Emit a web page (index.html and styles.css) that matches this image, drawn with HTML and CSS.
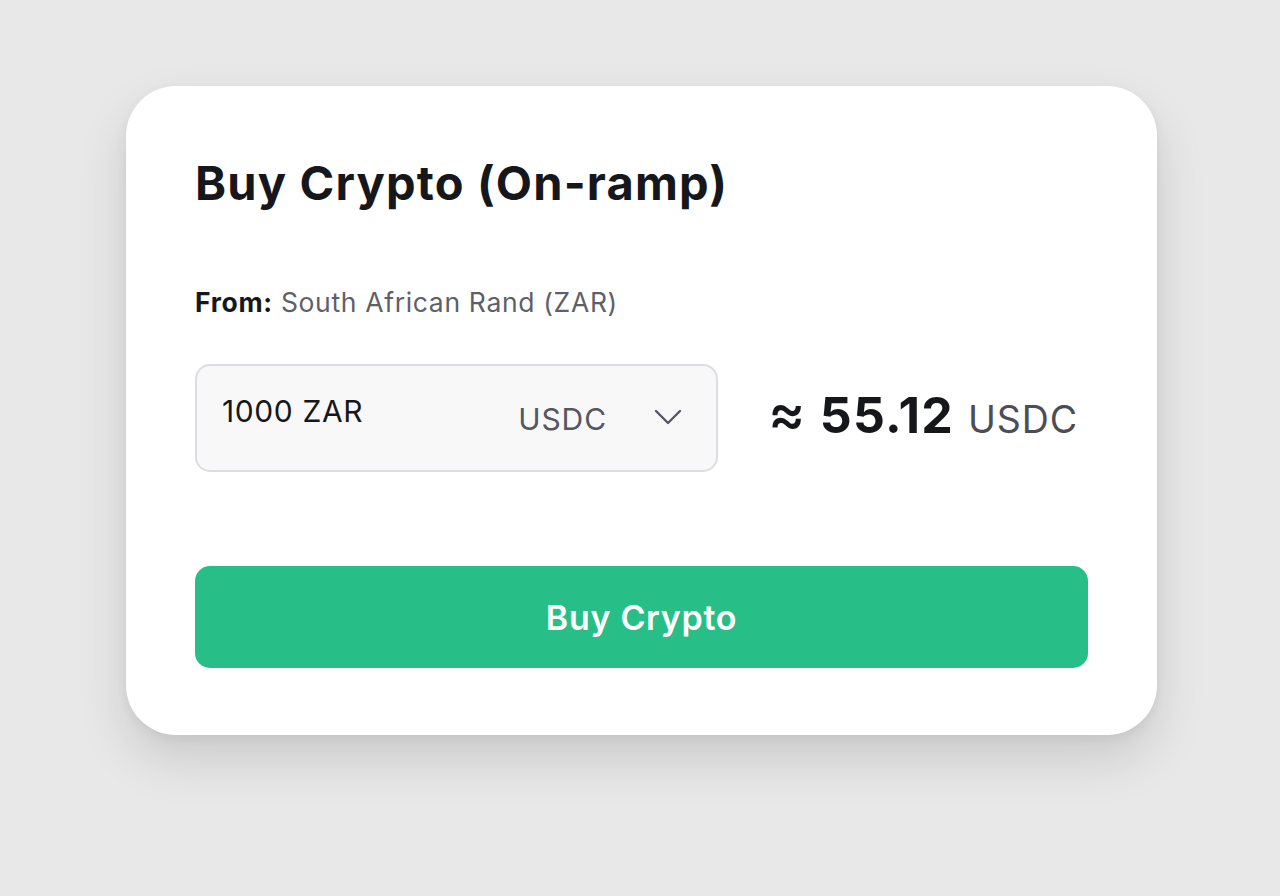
FILE: index.html
```html
<!DOCTYPE html>
<html>
<head>
<meta charset="utf-8">
<link rel="stylesheet" href="styles.css">
</head>
<body>
<main class="card">
  <h1 class="title">Buy Crypto (On-ramp)</h1>
  <p class="from"><span class="from-label">From:</span> <span class="from-value">South African Rand (ZAR)</span></p>
  <div class="row">
    <div class="field">
      <span class="amount">1000 ZAR</span>
      <span class="select">
        <span class="currency">USDC</span>
        <svg class="chevron" width="28" height="16" viewBox="0 0 28 16"><path d="M2 2 L14 14 L26 2" fill="none" stroke="#555762" stroke-width="2.4" stroke-linecap="round" stroke-linejoin="round"/></svg>
      </span>
    </div>
    <div class="result">
      <span class="approx">≈</span>
      <span class="value">55.12</span>
      <span class="unit">USDC</span>
    </div>
  </div>
  <button class="buy">Buy Crypto</button>
</main>
</body>
</html>
```
FILE: styles.css
```css
* { box-sizing: border-box; }
html, body { margin: 0; }
body {
  background: #e8e8e8;
  font-family: Inter, "Noto Sans", sans-serif;
  letter-spacing: 0.02em;
  height: 896px;
  padding-top: 86px;
  display: flex;
  justify-content: center;
  align-items: flex-start;
}
.card {
  width: 1031px;
  height: 649px;
  margin-left: 3px;
  background: #fff;
  border-radius: 50px;
  box-shadow: 0 24px 50px rgba(0,0,0,0.13), 0 4px 12px rgba(0,0,0,0.05);
  padding: 62px 69px 0 69px;
  display: flex;
  flex-direction: column;
}
.title {
  margin: 0;
  font-size: 47px;
  font-weight: 700;
  color: #16171b;
  line-height: 70px;
  letter-spacing: 0.025em;
}
.from {
  margin: 68px 0 0 0;
  font-size: 26.5px;
  line-height: 32px;
  letter-spacing: 0.025em;
}
.from-label { font-weight: 700; color: #16171b; }
.from-value { color: #5e5f68; }
.row {
  margin-top: 46px;
  display: flex;
  align-items: center;
}
.field {
  width: 523px;
  height: 108px;
  border: 2px solid #dcdde2;
  border-radius: 15px;
  background: #f8f8f9;
  display: flex;
  align-items: center;
  justify-content: space-between;
  padding: 0 34px 0 25px;
}
.amount {
  font-size: 30px;
  letter-spacing: 0.02em;
  color: #16171b;
  margin-top: -14px;
}
.select {
  display: flex;
  align-items: center;
  gap: 47px;
  margin-top: 2px;
}
.currency { font-size: 30px; color: #55565f; letter-spacing: 0.03em; }
.chevron { margin-top: -4px; }
.result {
  margin-left: 54px;
  margin-top: -10px;
  display: flex;
  align-items: baseline;
  gap: 14px;
}
.approx { font-size: 56px; font-weight: 500; color: #16171b; margin-left: -4px; }
.value { font-size: 50px; font-weight: 700; color: #16171b; letter-spacing: 0.025em; }
.unit { font-size: 37.5px; color: #4c4d55; letter-spacing: 0.025em; }
.buy {
  margin-top: 94px;
  width: 893px;
  height: 102px;
  border: none;
  border-radius: 15px;
  background: #27bf87;
  color: #fff;
  font-family: inherit;
  font-size: 34px;
  font-weight: 600;
  letter-spacing: 0.02em;
  padding: 0;
}
```
